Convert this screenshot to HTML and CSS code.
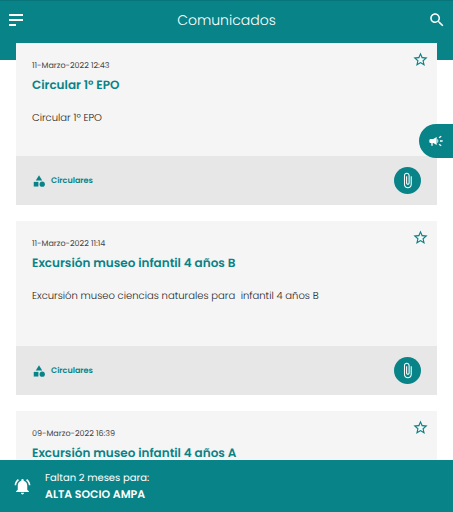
FILE: index.html
```html
<!DOCTYPE html>
<html lang="es">
<head>
    <meta charset="UTF-8">
    <meta name="viewport" content="width=device-width, initial-scale=1.0">
    <title>Comunicados</title>
    <link rel="stylesheet" href="styles.css">
</head>
<body>
    <!-- Shared icons -->
    <svg class="icon-defs" aria-hidden="true">
        <symbol id="star" viewBox="0 0 24 24">
            <path d="M22 9.24l-7.19-.62L12 2 9.19 8.63 2 9.24l5.46 4.73L5.82 21 12 17.27 18.18 21l-1.63-7.03L22 9.24zM12 15.4l-3.76 2.27 1-4.28-3.32-2.88 4.38-.38L12 6.1l1.71 4.04 4.38.38-3.32 2.88 1 4.28L12 15.4z"/>
        </symbol>
        <symbol id="category" viewBox="0 0 24 24">
            <path d="M12 2l-5.500 9h11z"/>
            <circle cx="17.5" cy="17.5" r="4.5"/>
            <path d="M3 13.500h8v8H3z"/>
        </symbol>
        <symbol id="clip" viewBox="0 0 24 24">
            <path d="M18 6v11.500c0 3.040-2.460 5.500-5.500 5.500S7 20.540 7 17.500V5c0-2.210 1.790-4 4-4s4 1.790 4 4v10.500c0 1.380-1.120 2.500-2.500 2.500S10 16.880 10 15.500V6h1.500v9.500c0 .55.45 1 1 1s1-.45 1-1V5c0-1.380-1.120-2.500-2.500-2.500S8.500 3.620 8.500 5v12.500c0 2.210 1.790 4 4 4s4-1.790 4-4V6H18z"/>
        </symbol>
    </svg>

    <div class="app">
        <!-- Header Section -->
        <header class="header">
            <button class="icon-button" aria-label="Menú">
                <svg class="menu-icon" viewBox="0 0 14 13">
                    <path d="M0 0h14v2H0zM0 5h14v2H0zM0 10h7v2H0z"/>
                </svg>
            </button>
            <h1>Comunicados</h1>
            <button class="icon-button" aria-label="Buscar">
                <svg class="search-icon" viewBox="0 0 24 24">
                    <path d="M15.500 14h-.79l-.28-.27C15.410 12.590 16 11.110 16 9.500 16 5.910 13.090 3 9.500 3S3 5.910 3 9.500 5.910 16 9.500 16c1.610 0 3.090-.59 4.230-1.570l.27.28v.79l5 4.990L20.490 19l-4.990-5zm-6 0C7.010 14 5 11.990 5 9.500S7.010 5 9.500 5 14 7.010 14 9.500 11.990 14 9.500 14z"/>
                </svg>
            </button>
        </header>

        <!-- Announcements -->
        <main class="list">
            <article class="card">
                <div class="card-body">
                    <div class="card-text">
                        <time>11-Marzo-2022 12:43</time>
                        <h2>Circular 1º EPO</h2>
                        <p>Circular 1º EPO</p>
                    </div>
                    <button class="star-button" aria-label="Destacar"><svg><use href="#star"/></svg></button>
                </div>
                <div class="card-footer">
                    <a class="category" href="#"><svg><use href="#category"/></svg>Circulares</a>
                    <button class="clip-button" aria-label="Adjuntos"><svg><use href="#clip"/></svg></button>
                </div>
            </article>

            <article class="card">
                <div class="card-body tall">
                    <div class="card-text">
                        <time>11-Marzo-2022 11:14</time>
                        <h2>Excursión museo infantil 4 años B</h2>
                        <p>Excursión museo ciencias naturales para&nbsp; infantil 4 años B</p>
                    </div>
                    <button class="star-button" aria-label="Destacar"><svg><use href="#star"/></svg></button>
                </div>
                <div class="card-footer">
                    <a class="category" href="#"><svg><use href="#category"/></svg>Circulares</a>
                    <button class="clip-button" aria-label="Adjuntos"><svg><use href="#clip"/></svg></button>
                </div>
            </article>

            <article class="card">
                <div class="card-body tall">
                    <div class="card-text">
                        <time>09-Marzo-2022 16:39</time>
                        <h2>Excursión museo infantil 4 años A</h2>
                    </div>
                    <button class="star-button" aria-label="Destacar"><svg><use href="#star"/></svg></button>
                </div>
            </article>
        </main>

        <!-- Bottom Notice -->
        <footer class="notice">
            <svg class="bell-icon" viewBox="0 0 24 24">
                <path d="M7.580 4.080L6.150 2.650C3.750 4.480 2.170 7.300 2.030 10.500h2c.15-2.650 1.510-4.970 3.550-6.420zM19.970 10.500h2c-.15-3.200-1.730-6.020-4.120-7.850l-1.420 1.430c2.020 1.450 3.390 3.770 3.540 6.420zM18 11c0-3.070-1.640-5.640-4.500-6.320V4c0-.83-.67-1.500-1.500-1.500s-1.500.67-1.500 1.500v.68C7.630 5.360 6 7.920 6 11v5l-2 2v1h16v-1l-2-2v-5zM12 22c1.100 0 2-.9 2-2h-4c0 1.100.89 2 2 2z"/>
            </svg>
            <div>
                <div class="notice-label">Faltan 2 meses para:</div>
                <div class="notice-title">ALTA SOCIO AMPA</div>
            </div>
        </footer>

        <!-- Floating Button -->
        <button class="announce-button" aria-label="Avisos">
            <svg viewBox="0 0 24 24">
                <path d="M18 11v2h4v-2h-4zM16 17.610c.96.71 2.210 1.650 3.200 2.390.4-.53.8-1.070 1.200-1.600-.99-.74-2.240-1.680-3.200-2.400-.4.540-.8 1.080-1.200 1.610zM20.400 5.600c-.4-.53-.8-1.070-1.200-1.600-.99.74-2.240 1.680-3.200 2.400.4.530.8 1.070 1.200 1.600.96-.72 2.210-1.650 3.200-2.400zM4 9c-1.100 0-2 .9-2 2v2c0 1.100.9 2 2 2h1v4h2v-4h1l5 3V6L8 9H4zM15.500 12c0-1.330-.58-2.530-1.500-3.350v6.690c.92-.81 1.500-2.010 1.500-3.340z"/>
            </svg>
        </button>
    </div>
</body>
</html>
```

FILE: styles.css
```css
/* Global Styles */
* {
    box-sizing: border-box;
}

body {
    margin: 0;
    background: #fff;
    color: #222;
    font-family: Poppins, Inter, sans-serif;
    text-rendering: geometricPrecision;
}

h1,
h2,
p {
    margin: 0;
}

button {
    padding: 0;
    border: none;
    background: none;
    color: inherit;
    cursor: pointer;
}

svg {
    display: block;
    fill: currentColor;
}

.icon-defs {
    display: none;
}

.app {
    position: relative;
    display: flex;
    flex-direction: column;
    height: 100vh;
    overflow: hidden;
}

/* Header Section */
.header {
    display: flex;
    align-items: flex-start;
    justify-content: space-between;
    flex-shrink: 0;
    height: 60px;
    padding: 8px 8px 0;
    background: #088387;
    border-top: 1px solid #08757a;
    color: #fff;
}

.header h1 {
    font-size: 14px;
    font-weight: 300;
    line-height: 22px;
}

.icon-button {
    display: flex;
    align-items: center;
    justify-content: center;
    width: 16px;
    height: 22px;
}

.menu-icon {
    width: 14px;
    height: 13px;
}

.search-icon {
    flex-shrink: 0;
    width: 18px;
    height: 18px;
}

/* Cards */
.list {
    display: flex;
    flex: 1;
    flex-direction: column;
    gap: 16px;
    min-height: 0;
    margin-top: -17px;
    padding: 0 16px;
    overflow: hidden;
}

.card {
    flex-shrink: 0;
    background: #f5f5f5;
}

.card-body {
    display: flex;
    align-items: flex-start;
    justify-content: space-between;
    min-height: 113px;
    padding: 8px 8px 8px 16px;
}

.card-body.tall {
    min-height: 125px;
}

.card-text {
    padding-top: 7px;
}

.card time {
    display: block;
    color: #444;
    font-size: 8px;
    font-weight: 400;
    line-height: 16px;
}

.card h2 {
    color: #088387;
    font-size: 12px;
    font-weight: 600;
    line-height: 24px;
}

.card p {
    margin-top: 12px;
    font-size: 10px;
    font-weight: 300;
    line-height: 16px;
}

.star-button {
    color: #088387;
}

.star-button svg {
    width: 17px;
    height: 17px;
}

.card-footer {
    display: flex;
    align-items: center;
    justify-content: space-between;
    height: 49px;
    padding: 0 16px;
    background: #e7e7e7;
}

.category {
    display: flex;
    align-items: center;
    gap: 5px;
    color: #088387;
    font-size: 8px;
    font-weight: 600;
    line-height: 16px;
    text-decoration: none;
}

.category svg {
    width: 14px;
    height: 14px;
}

.clip-button {
    display: flex;
    align-items: center;
    justify-content: center;
    width: 27px;
    height: 27px;
    border-radius: 50%;
    background: #088387;
    color: #fff;
}

.clip-button svg {
    width: 17px;
    height: 17px;
}

/* Floating Button */
.announce-button {
    position: absolute;
    top: 124px;
    right: 0;
    display: flex;
    align-items: center;
    width: 34px;
    height: 34px;
    padding-left: 9px;
    border-radius: 17px 0 0 17px;
    background: #088387;
    color: #fff;
}

.announce-button svg {
    width: 16px;
    height: 16px;
}

/* Bottom Notice */
.notice {
    display: flex;
    align-items: center;
    flex-shrink: 0;
    gap: 13px;
    height: 52px;
    padding: 0 13px;
    background: #088387;
    color: #fff;
}

.bell-icon {
    width: 19px;
    height: 19px;
}

.notice-label {
    font-size: 10px;
    font-weight: 400;
    line-height: 16px;
}

.notice-title {
    font-size: 11px;
    font-weight: 600;
    line-height: 16px;
}
```
